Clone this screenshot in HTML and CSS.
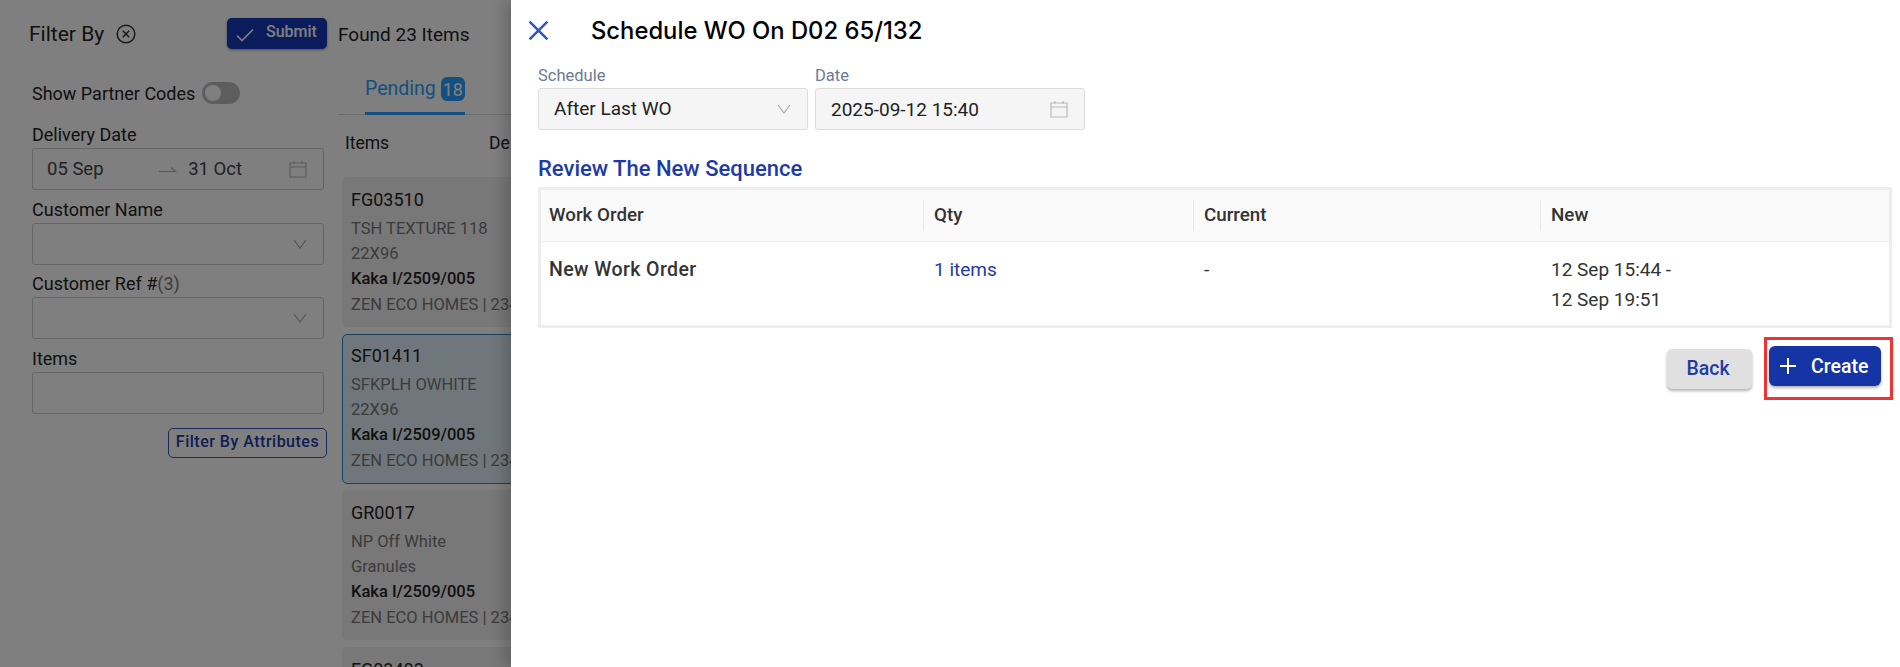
FILE: index.html
```html
<!DOCTYPE html>
<html lang="en">
<head>
    <meta charset="UTF-8">
    <title>Schedule WO</title>
    <link rel="stylesheet" href="styles.css">
</head>
<body>
    <div class="page">
        <aside class="filters">
            <div class="filters-head">
                <span class="filters-title">Filter By</span>
                <svg class="clear-icon" viewBox="0 0 20 20" width="20" height="20"><circle cx="10" cy="10" r="8.8"/><path d="M6.8 6.8l6.4 6.4M13.2 6.8l-6.4 6.4"/></svg>
                <button class="submit-btn">
                    <svg viewBox="0 0 18 14" width="18" height="14"><path d="M1 7.5l5 5L17 1.5"/></svg>
                    Submit
                </button>
            </div>
            <div class="partner-row">
                <span>Show Partner Codes</span>
                <span class="toggle"><span class="toggle-knob"></span></span>
            </div>
            <label class="field-label">Delivery Date</label>
            <div class="field date-range">
                <span class="range-from">05 Sep</span>
                <svg class="range-arrow" viewBox="0 0 18 6" width="18" height="6"><path d="M0 5.5h16.5L12 1.5"/></svg>
                <span class="range-to">31 Oct</span>
                <svg class="calendar" viewBox="0 0 18 18" width="18" height="18"><path d="M1 3h16v14H1zM1 7h16M5 1v3M13 1v3"/></svg>
            </div>
            <label class="field-label">Customer Name</label>
            <div class="field">
                <svg class="chevron" viewBox="0 0 14 10" width="14" height="10"><path d="M1 1l6 8 6-8"/></svg>
            </div>
            <label class="field-label">Customer Ref #<span class="count">(3)</span></label>
            <div class="field">
                <svg class="chevron" viewBox="0 0 14 10" width="14" height="10"><path d="M1 1l6 8 6-8"/></svg>
            </div>
            <label class="field-label">Items</label>
            <div class="field"></div>
            <div class="attr-row"><button class="attr-btn">Filter By Attributes</button></div>
        </aside>

        <main class="results">
            <div class="found">Found 23 Items</div>
            <div class="tabs">
                <div class="tab-active">Pending <span class="badge">18</span></div>
            </div>
            <div class="columns"><span class="col-items">Items</span><span>De</span></div>
            <div class="card">
                <div class="card-code">FG03510</div>
                <div class="card-line">TSH TEXTURE 118</div>
                <div class="card-line">22X96</div>
                <div class="card-ref">Kaka I/2509/005</div>
                <div class="card-line">ZEN ECO HOMES | 234</div>
            </div>
            <div class="card card-selected">
                <div class="card-code">SF01411</div>
                <div class="card-line">SFKPLH OWHITE</div>
                <div class="card-line">22X96</div>
                <div class="card-ref">Kaka I/2509/005</div>
                <div class="card-line">ZEN ECO HOMES | 234</div>
            </div>
            <div class="card">
                <div class="card-code">GR0017</div>
                <div class="card-line">NP Off White</div>
                <div class="card-line">Granules</div>
                <div class="card-ref">Kaka I/2509/005</div>
                <div class="card-line">ZEN ECO HOMES | 234</div>
            </div>
            <div class="card">
                <div class="card-code">FG03403</div>
            </div>
        </main>
    </div>

    <div class="overlay"></div>

    <section class="drawer">
        <header class="drawer-head">
            <svg class="close-icon" viewBox="0 0 20 20" width="21" height="21"><path d="M1.5 1.5l17 17M18.5 1.5l-17 17"/></svg>
            <h1>Schedule WO On D02 65/132</h1>
        </header>

        <div class="schedule-row">
            <div class="schedule-col">
                <label>Schedule</label>
                <div class="box box-select">
                    <span>After Last WO</span>
                    <svg class="chevron" viewBox="0 0 14 10" width="14" height="10"><path d="M1 1l6 8 6-8"/></svg>
                </div>
            </div>
            <div class="schedule-col">
                <label>Date</label>
                <div class="box">
                    <span>2025-09-12 15:40</span>
                    <svg class="calendar" viewBox="0 0 18 18" width="18" height="18"><path d="M1 3h16v14H1zM1 7h16M5 1v3M13 1v3"/></svg>
                </div>
            </div>
        </div>

        <h2>Review The New Sequence</h2>

        <div class="table-wrap">
            <table>
                <thead>
                    <tr>
                        <th class="col-wo"><span>Work Order</span></th>
                        <th class="col-qty"><span>Qty</span></th>
                        <th class="col-current"><span>Current</span></th>
                        <th><span>New</span></th>
                    </tr>
                </thead>
                <tbody>
                    <tr>
                        <td class="wo-name">New Work Order</td>
                        <td class="qty-link">1 items</td>
                        <td>-</td>
                        <td>12 Sep 15:44 -<br>12 Sep 19:51</td>
                    </tr>
                </tbody>
            </table>
        </div>

        <div class="actions">
            <button class="back-btn">Back</button>
            <div class="highlight">
                <button class="create-btn">
                    <svg viewBox="0 0 16 16" width="16" height="16"><path d="M8 0v16M0 8h16"/></svg>
                    Create
                </button>
            </div>
        </div>
    </section>
</body>
</html>
```

FILE: styles.css
```css
* {
    box-sizing: border-box;
}

html, body {
    margin: 0;
    height: 667px;
    overflow: hidden;
}

body {
    position: relative;
    font-family: Roboto, "Liberation Sans", sans-serif;
    color: #222;
    background: #fff;
}

svg {
    fill: none;
    stroke: currentColor;
    flex: none;
}

button {
    font-family: inherit;
    cursor: pointer;
}

.page {
    display: flex;
    height: 667px;
}

/* Left filter column */
.filters {
    width: 338px;
    padding: 18px 14px 0 32px;
}

.filters-head {
    display: flex;
    align-items: center;
    height: 31px;
    margin: 0 -3px 33px -3px;
}

.filters-title {
    font-size: 21px;
    margin-right: 12px;
}

.clear-icon {
    color: #333;
    stroke-width: 1.5;
}

.submit-btn {
    display: flex;
    align-items: center;
    gap: 12px;
    width: 100px;
    height: 31px;
    margin-left: auto;
    padding: 0 0 5px 9px;
    border: 0;
    border-radius: 5px;
    background: #1438b8;
    color: #fff;
    font-size: 16px;
    font-weight: 500;
    box-shadow: 0 1px 3px rgba(0, 0, 0, .4);
}

.submit-btn svg {
    stroke-width: 1.6;
    margin-top: 7px;
}

.partner-row {
    display: flex;
    align-items: center;
    gap: 7px;
    height: 22px;
    margin-bottom: 20px;
    font-size: 18px;
}

.toggle {
    display: block;
    width: 38px;
    height: 22px;
    padding: 3px;
    border-radius: 11px;
    background: #bbb;
}

.toggle-knob {
    display: block;
    width: 16px;
    height: 16px;
    border-radius: 50%;
    background: #fff;
}

.field-label {
    display: block;
    height: 24px;
    font-size: 18px;
    line-height: 22px;
}

.count {
    color: #777;
}

.field {
    display: flex;
    align-items: center;
    justify-content: flex-end;
    height: 42px;
    margin-bottom: 8.6px;
    padding-right: 16px;
    border: 1px solid #ccc;
    border-radius: 3px;
    font-size: 18.5px;
    color: #444;
}

.chevron {
    color: #aaa;
    stroke-width: 1.2;
}

.calendar {
    color: #bbb;
    stroke-width: 1.2;
}

.date-range .range-from {
    margin-right: auto;
    padding-left: 14px;
}

.range-arrow {
    margin-right: 11px;
    color: #aaa;
    stroke-width: 1.2;
}

.date-range .range-to {
    margin-right: 47px;
}

.attr-row {
    display: flex;
    justify-content: flex-end;
    margin-top: 14px;
    margin-right: -3px;
}

.attr-btn {
    width: 159px;
    height: 30px;
    padding: 0 0 2px;
    border: 1px solid #3a56b8;
    border-radius: 5px;
    background: transparent;
    color: #1f3aa8;
    font-size: 16px;
    font-weight: 500;
    letter-spacing: .5px;
}

/* Item list behind the drawer */
.results {
    flex: 1;
    min-width: 0;
    overflow: hidden;
    padding-top: 24px;
}

.found {
    height: 22px;
    font-size: 19px;
    line-height: 22px;
    margin-bottom: 31px;
}

.tabs {
    height: 38px;
    border-bottom: 1px solid #ddd;
    padding-left: 27px;
}

.tab-active {
    display: inline-flex;
    align-items: flex-start;
    gap: 5px;
    height: 38px;
    border-bottom: 3px solid #28a0ff;
    color: #28a0ff;
    font-size: 19.5px;
}

.badge {
    width: 24px;
    height: 24px;
    border-radius: 6px;
    background: #28a0ff;
    color: #fff;
    font-size: 18px;
    line-height: 25px;
    text-align: center;
}

.columns {
    display: flex;
    height: 26px;
    margin: 15px 0 21px 7px;
    font-size: 17.5px;
    line-height: 26px;
}

.col-items {
    width: 144px;
}

.card {
    width: 400px;
    height: 150px;
    margin: 0 0 6.5px 4px;
    padding: 11px 9px;
    border-radius: 5px;
    background: #f0f0f0;
}

.card-selected {
    border: 1px solid #2f86c9;
    background: #e0eef8;
    padding: 9.5px 8px;
}

.card-code {
    font-size: 18px;
    line-height: 24px;
    margin-bottom: 3.5px;
}

.card-line {
    font-size: 16.5px;
    line-height: 25.4px;
    color: #777;
    white-space: nowrap;
}

.card-ref {
    font-size: 16.5px;
    line-height: 25.4px;
    font-weight: 500;
}

/* Dark layer and drawer */
.overlay {
    position: absolute;
    inset: 0;
    background: rgba(0, 0, 0, .5);
}

.drawer {
    position: absolute;
    top: 0;
    bottom: 0;
    left: 511px;
    right: 0;
    padding: 0 8px 0 27px;
    background: #fff;
    box-shadow: -6px 0 14px rgba(0, 0, 0, .2);
}

.drawer-head {
    display: flex;
    align-items: center;
    gap: 42px;
    height: 60px;
    margin: 0 0 3px -10px;
}

.close-icon {
    color: #3355bb;
    stroke-width: 2.4;
}

.drawer-head h1 {
    margin: 0;
    font-family: Inter, "Open Sans", sans-serif;
    font-size: 23.8px;
    font-weight: 500;
    color: #000;
}

.schedule-row {
    display: flex;
    gap: 7px;
    height: 67px;
}

.schedule-col {
    width: 270px;
}

.schedule-col label {
    display: block;
    height: 25px;
    font-size: 16.5px;
    line-height: 25px;
    color: #6c7a96;
}

.box {
    display: flex;
    align-items: center;
    justify-content: space-between;
    height: 42px;
    padding: 0 16px 0 15px;
    border: 1px solid #ddd;
    border-radius: 3px;
    background: #f5f5f5;
    font-size: 19px;
    color: #222;
}

.box-select span {
    padding-bottom: 2px;
}

.drawer h2 {
    margin: 25px 0 0;
    height: 32px;
    font-size: 22px;
    line-height: 28px;
    font-weight: 500;
    color: #1e3aa8;
}

.table-wrap {
    border: 3px solid #eee;
    height: 141px;
}

table {
    width: 100%;
    border-collapse: collapse;
    table-layout: fixed;
}

th {
    height: 51px;
    padding: 0;
    border-bottom: 1px solid #eee;
    background: #fafafa;
    text-align: left;
    font-size: 18.8px;
    font-weight: 500;
    color: #333;
}

th span {
    display: flex;
    align-items: center;
    height: 31px;
    padding-left: 10px;
    border-left: 1px solid #e8e8e8;
}

th:first-child span {
    border-left: 0;
    padding-left: 8px;
}

.col-wo {
    width: 382px;
}

.col-qty {
    width: 270px;
}

.col-current {
    width: 347px;
}

td {
    padding: 13px 0 0 11px;
    vertical-align: top;
    font-size: 19px;
    line-height: 30px;
    color: #333;
}

td.wo-name {
    padding-left: 8px;
    font-size: 19.5px;
    font-weight: 500;
    letter-spacing: .4px;
}

td.qty-link {
    color: #1e3aa8;
}

.actions {
    display: flex;
    justify-content: flex-end;
    align-items: center;
    margin: 9px -1px 0 0;
}

.back-btn {
    width: 85px;
    height: 40px;
    margin-right: 12px;
    padding: 0 3px 0 0;
    border: 0;
    border-radius: 5px;
    background: #e0e0e0;
    color: #1e3aa8;
    font-size: 19.5px;
    font-weight: 500;
    box-shadow: 0 2px 3px rgba(0, 0, 0, .3);
}

.highlight {
    padding: 6px 9px 11px 2px;
    border: 3px solid #ee3333;
}

.create-btn {
    display: flex;
    align-items: center;
    gap: 15px;
    width: 112px;
    height: 40px;
    padding: 0 0 0 11px;
    border: 0;
    border-radius: 6px;
    background: #1535a6;
    color: #fff;
    font-size: 19.5px;
    font-weight: 500;
    box-shadow: 0 2px 3px rgba(0, 0, 0, .3);
}

.create-btn svg {
    stroke-width: 2;
}
```
